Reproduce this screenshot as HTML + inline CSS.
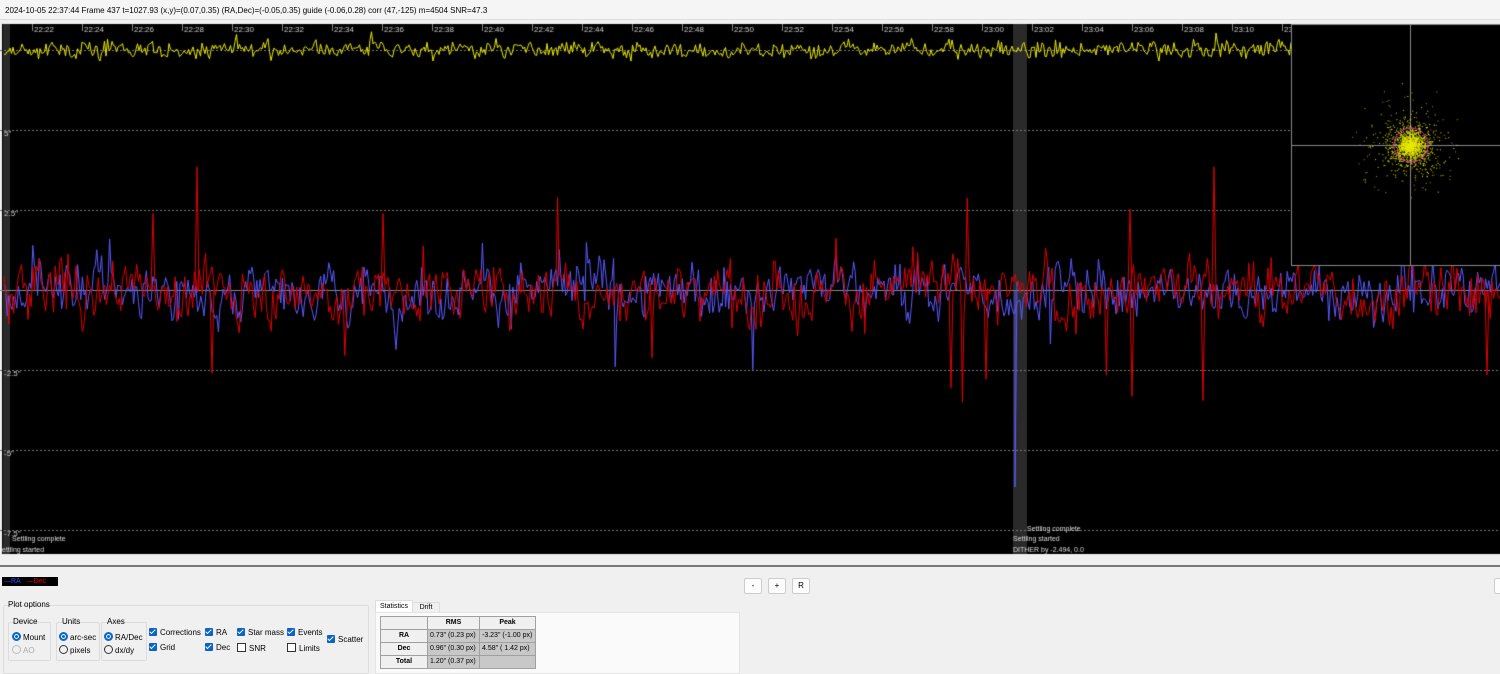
<!DOCTYPE html>
<html><head><meta charset="utf-8"><style>
body{margin:0;width:1500px;height:674px;background:#f0f0f0;font-family:"Liberation Sans",sans-serif;font-size:8px;color:#000;position:relative;overflow:hidden}
.abs{position:absolute;white-space:nowrap}
canvas{position:absolute;left:0;top:22px}
.btn{position:absolute;width:16px;height:14px;background:#fdfdfd;border:1px solid #ccc;border-radius:2px;text-align:center;line-height:14px;font-size:8px}
.cb{display:inline-block;width:8px;height:8px;background:#0a64c8;border-radius:1px;vertical-align:-1px;margin-right:3px;position:relative}
.cb:after{content:"";position:absolute;left:2px;top:0px;width:2px;height:5px;border:solid #fff;border-width:0 1px 1px 0;transform:rotate(45deg)}
.cbe{display:inline-block;width:7px;height:7px;border:1px solid #333;background:#fff;vertical-align:-1px;margin-right:3px}
.rd{display:inline-block;width:5px;height:5px;border:2px solid #0a64c8;border-radius:50%;background:#0a64c8;box-shadow:inset 0 0 0 1px #fff;vertical-align:-1px;margin-right:2px}
.re{display:inline-block;width:7px;height:7px;border:1px solid #333;border-radius:50%;vertical-align:-1px;margin-right:2px}
.gb{position:absolute;border:1px solid #dcdcdc;border-radius:2px}
table{border-collapse:collapse;font-size:7px}
td{border:1px solid #a0a0a0;height:12px;padding:0 2px;white-space:nowrap;line-height:12px}
</style></head><body>
<div class="abs" style="left:0;top:0;width:1500px;height:19px;background:#f5f5f5;border-bottom:1px solid #ddd"></div>
<div class="abs" style="left:5px;top:6px;font-size:8px">2024-10-05 22:37:44 Frame 437 t=1027.93 (x,y)=(0.07,0.35) (RA,Dec)=(-0.05,0.35) guide (-0.06,0.28) corr (47,-125) m=4504 SNR=47.3</div>
<canvas id="c" width="1500" height="533"></canvas>
<div class="abs" style="left:0;top:565px;width:1500px;height:2px;background:#777"></div>
<div class="abs" style="left:2px;top:577px;width:56px;height:9px;background:#000;font-size:7px;line-height:9px"><span style="color:#44f">&nbsp;—RA</span>&nbsp;&nbsp;&nbsp;<span style="color:#e00">—Dec</span></div>
<div class="btn" style="left:744px;top:578px">-</div>
<div class="btn" style="left:768px;top:578px">+</div>
<div class="btn" style="left:792px;top:578px">R</div>
<div class="btn" style="left:1494px;top:578px"></div>
<div class="gb" style="left:3px;top:605px;width:364px;height:67px"></div>
<div class="abs" style="left:8px;top:600px">Plot options</div>
<div class="gb" style="left:8px;top:622px;width:41px;height:37px"></div><div class="abs" style="left:13px;top:617px">Device</div>
<div class="abs" style="left:12px;top:632px"><span class="rd"></span>Mount</div>
<div class="abs" style="left:12px;top:645px;color:#aaa"><span class="re" style="border-color:#bbb"></span>AO</div>
<div class="gb" style="left:56px;top:622px;width:42px;height:37px"></div><div class="abs" style="left:62px;top:617px">Units</div>
<div class="abs" style="left:59px;top:632px"><span class="rd"></span>arc-sec</div>
<div class="abs" style="left:59px;top:645px"><span class="re"></span>pixels</div>
<div class="gb" style="left:101px;top:622px;width:44px;height:37px"></div><div class="abs" style="left:107px;top:617px">Axes</div>
<div class="abs" style="left:104px;top:632px"><span class="rd"></span>RA/Dec</div>
<div class="abs" style="left:104px;top:645px"><span class="re"></span>dx/dy</div>
<div class="abs" style="left:149px;top:628px"><span class="cb"></span>Corrections</div>
<div class="abs" style="left:149px;top:643px"><span class="cb"></span>Grid</div>
<div class="abs" style="left:205px;top:628px"><span class="cb"></span>RA</div>
<div class="abs" style="left:205px;top:643px"><span class="cb"></span>Dec</div>
<div class="abs" style="left:237px;top:628px"><span class="cb"></span>Star mass</div>
<div class="abs" style="left:237px;top:643px"><span class="cbe"></span>SNR</div>
<div class="abs" style="left:287px;top:628px"><span class="cb"></span>Events</div>
<div class="abs" style="left:287px;top:643px"><span class="cbe"></span>Limits</div>
<div class="abs" style="left:327px;top:635px"><span class="cb"></span>Scatter</div>
<div class="abs" style="left:375px;top:600px;width:36px;height:12px;background:#fff;border:1px solid #ddd;border-bottom:none;font-size:7px;line-height:12px;text-align:center">Statistics</div>
<div class="abs" style="left:412px;top:602px;width:26px;height:10px;border:1px solid #ddd;border-bottom:none;font-size:7px;line-height:10px;text-align:center">Drift</div>
<div class="abs" style="left:375px;top:612px;width:363px;height:60px;background:#fafafa;border:1px solid #e4e4e4"></div>
<table class="abs" style="left:380px;top:616px">
<tr><td style="width:42px;background:#f0f0f0"></td><td style="width:47px;background:#f0f0f0;text-align:center;font-weight:bold">RMS</td><td style="width:51px;background:#f0f0f0;text-align:center;font-weight:bold">Peak</td></tr>
<tr><td style="background:#f0f0f0;text-align:center;font-weight:bold">RA</td><td style="background:#c8c8c8">0.73" (0.23 px)</td><td style="background:#c8c8c8">-3.23" (-1.00 px)</td></tr>
<tr><td style="background:#f0f0f0;text-align:center;font-weight:bold">Dec</td><td style="background:#c8c8c8">0.96" (0.30 px)</td><td style="background:#c8c8c8">4.58" ( 1.42 px)</td></tr>
<tr><td style="background:#f0f0f0;text-align:center;font-weight:bold">Total</td><td style="background:#c8c8c8">1.20" (0.37 px)</td><td style="background:#c8c8c8"></td></tr>
</table>
<script>
var c=document.getElementById('c'),g=c.getContext('2d');
var s=12345;function r(){s=(s*1103515245+12345)&0x7fffffff;return s/0x7fffffff;}
function gs(){return (r()+r()+r()+r()-2)*1.7;}
g.fillStyle='#000';g.fillRect(2,2,1498,530);
g.fillStyle='#2a2a2a';g.fillRect(3,2,7,530);g.fillRect(1013,2,14,530);
g.strokeStyle='#777';g.lineWidth=1;g.setLineDash([2,2]);
[28,108,188,348,428,508].forEach(function(y){g.beginPath();g.moveTo(0,y+.5);g.lineTo(1500,y+.5);g.stroke();});
g.setLineDash([]);g.strokeStyle='#888';g.beginPath();g.moveTo(0,268.5);g.lineTo(1500,268.5);g.stroke();
g.font='8px "Liberation Sans"';g.fillStyle='#ccc';
var yl=['5"','2.5"','-2.5"','-5"','-7.5"'],yy=[108,188,348,428,508];
for(var i=0;i<5;i++)g.fillText(yl[i],4,yy[i]+6);
for(var k=0;k<26;k++){var x=33+k*50,h=22,m=22+2*k;if(m>=60){h=23;m-=60;}g.fillStyle='#888';g.fillRect(x-1,2,1,7);g.fillStyle='#ccc';g.fillText(h+':'+(m<10?'0'+m:m),x+1,10);}
g.strokeStyle='#e8e800';g.beginPath();var q=0;
for(var x=4;x<1292;x+=1.5){q=gs()*6*.7+q*.3;var y=28+q+(r()<.06?-(r()*10):0);if(x==4)g.moveTo(x,y);else g.lineTo(x,y);}g.stroke();
function trace(col,sp,a){g.strokeStyle=col;g.beginPath();var p=0,lf=0;
for(var x=4;x<1500;x+=1.6){lf=lf*.9+gs()*3;var v=gs()*a;if(r()<sp)v*=2+r()*1.8;p=v*.65+p*.35;var y=268-p-lf;if(x==4)g.moveTo(x,y);else g.lineTo(x,y);}g.stroke();}
trace('#5a5aff',.04,19);trace('#e00000',.05,21);
g.strokeStyle='#5a5aff';g.beginPath();g.moveTo(1015,268);g.lineTo(1015,465);g.lineTo(1017,260);g.stroke();
g.strokeStyle='#e00000';[[197,-145],[1214,-145],[1130,-95],[1203,130],[951,115],[1132,125],[1487,100],[212,98],[986,105],[153,-90],[383,-90]].forEach(function(a){g.beginPath();g.moveTo(a[0]-2,268);g.lineTo(a[0],268+a[1]*.85);g.lineTo(a[0]+2,268);g.stroke();});
g.fillStyle='#000';g.fillRect(1291,2,209,241);g.strokeStyle='#888';g.strokeRect(1291.5,2.5,209,241);
g.beginPath();g.moveTo(1410.5,3);g.lineTo(1410.5,243);g.moveTo(1292,123.5);g.lineTo(1500,123.5);g.stroke();
g.fillStyle='#e8e800';for(var i=0;i<1600;i++){var rr=Math.abs(gs())*(r()<.3?20:11),t=r()*6.283;g.fillRect(1410+Math.cos(t)*rr,123+Math.sin(t)*rr,1,1);}
g.fillStyle='#a0a000';for(var i=0;i<120;i++){var rr=15+r()*45,t=r()*6.283;g.fillRect(1410+Math.cos(t)*rr,123+Math.sin(t)*rr,1,1);}
g.strokeStyle='#d020d0';g.beginPath();g.arc(1411,123,17,0,7);g.stroke();
g.fillStyle='#ddd';g.font='7px "Liberation Sans"';
g.fillText('Settling complete',12,519);g.fillText('ettling started',2,530);
g.fillText('Settling complete',1027,509);g.fillText('Settling started',1013,519);g.fillText('DITHER by -2.494, 0.0',1013,530);
</script>
</body></html>
